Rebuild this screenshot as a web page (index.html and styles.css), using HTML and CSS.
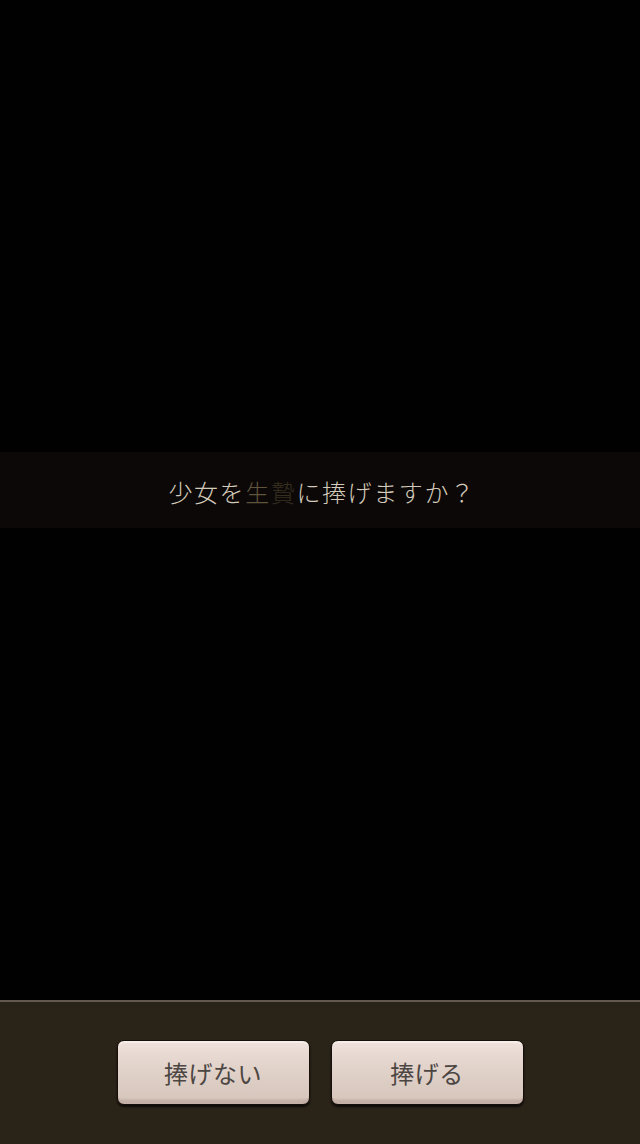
FILE: index.html
```html
<!DOCTYPE html>
<html lang="ja">
<head>
    <meta charset="UTF-8">
    <meta name="viewport" content="width=device-width, initial-scale=1.0">
    <title>生贄</title>
    <link rel="stylesheet" href="styles.css">
</head>
<body>
    <div class="screen">
        <!-- Dark scene with the question banner -->
        <div class="stage">
            <div class="banner">
                <p class="question">少女を<span class="key-a">生</span><span class="key-b">贄</span>に捧げますか？</p>
            </div>
        </div>

        <!-- Choice panel -->
        <div class="choices">
            <button class="choice">捧げない</button>
            <button class="choice">捧げる</button>
        </div>
    </div>
</body>
</html>
```

FILE: styles.css
```css
html, body {
    margin: 0;
    padding: 0;
    background: #000;
}
body {
    font-family: "Noto Sans CJK JP", "Noto Sans", sans-serif;
}
.screen {
    display: flex;
    flex-direction: column;
    height: 1144px;
    width: 640px;
}
.stage {
    flex: 1;
    background: #020101;
    padding-top: 452px;
    box-sizing: border-box;
}
.banner {
    height: 76px;
    background: #0c0808;
    display: flex;
    align-items: center;
    justify-content: center;
}
.question {
    margin: 0;
    padding-top: 2px;
    padding-left: 4px;
    font-size: 24px;
    font-weight: 300;
    letter-spacing: 1.6px;
    color: #d4cab9;
}
.key-a {
    color: #5f553b;
}
.key-b {
    color: #352d1e;
}
.choices {
    height: 144px;
    box-sizing: border-box;
    border-top: 2px solid #62584d;
    background: #2a2318;
    display: flex;
    justify-content: center;
    gap: 21px;
    padding-top: 38px;
}
.choice {
    width: 193px;
    height: 65px;
    border: 1px solid #15100b;
    border-radius: 7px;
    background: linear-gradient(#efe2dc, #e2d3cb 40%, #d7c7bd 90%, #b09c92);
    box-shadow: inset 0 2px 0 #f6ece8, inset 0 -3px 0 #c4b0a7, 0 2px 2px rgba(0, 0, 0, 0.7);
    font-family: "Noto Sans CJK JP", sans-serif;
    font-size: 24px;
    font-weight: 400;
    color: #4c4643;
    letter-spacing: 0.5px;
    padding: 0;
    cursor: pointer;
}
```
